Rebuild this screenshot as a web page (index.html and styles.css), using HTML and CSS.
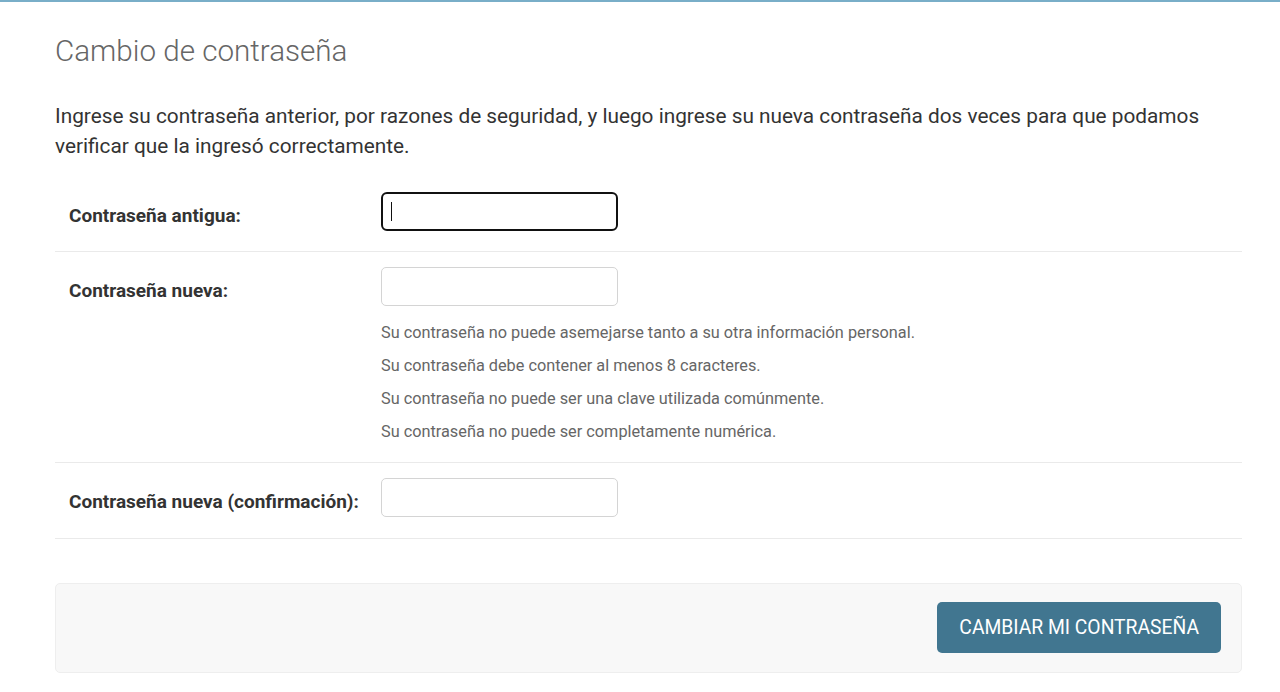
FILE: index.html
```html
<!DOCTYPE html>
<html lang="es">
<head>
<meta charset="utf-8">
<title>Cambio de contraseña</title>
<link rel="stylesheet" href="styles.css">
</head>
<body>
<div class="topbar"></div>
<main class="content">
  <h1 class="title">Cambio de contraseña</h1>
  <p class="intro">Ingrese su contraseña anterior, por razones de seguridad, y luego ingrese su nueva contraseña dos veces para que podamos verificar que la ingresó correctamente.</p>
  <form class="form">
    <div class="row row-first">
      <label class="label">Contraseña antigua:</label>
      <div class="field">
        <div class="input-wrap">
          <input class="input focused" type="password">
          <span class="caret"></span>
        </div>
      </div>
    </div>
    <div class="row row-help">
      <label class="label">Contraseña nueva:</label>
      <div class="field">
        <input class="input" type="password">
        <ul class="help">
          <li>Su contraseña no puede asemejarse tanto a su otra información personal.</li>
          <li>Su contraseña debe contener al menos 8 caracteres.</li>
          <li>Su contraseña no puede ser una clave utilizada comúnmente.</li>
          <li>Su contraseña no puede ser completamente numérica.</li>
        </ul>
      </div>
    </div>
    <div class="row">
      <label class="label">Contraseña nueva (confirmación):</label>
      <div class="field">
        <input class="input" type="password">
      </div>
    </div>
    <div class="submit-row">
      <button class="btn" type="button">CAMBIAR MI CONTRASEÑA</button>
    </div>
  </form>
</main>
</body>
</html>
```

FILE: styles.css
```css
* { box-sizing: border-box; }
html, body { margin: 0; padding: 0; background: #fff; }
body {
  font-family: Roboto, "Liberation Sans", Arial, sans-serif;
  color: #333;
}
.topbar {
  height: 2px;
  background: #79aec8;
}
.content {
  width: 1242px;
  padding-left: 55px;
}
.title {
  margin: 31px 0 0;
  font-size: 29.6px;
  line-height: 36px;
  font-weight: 300;
  color: #666;
}
.intro {
  margin: 32px 0 0;
  font-size: 20.8px;
  line-height: 30px;
  color: #333;
}
.form { margin-top: 15px; }
.row {
  display: flex;
  padding: 15px 14px 21px;
  border-bottom: 1px solid #eaeaea;
}
.row-first { padding-top: 16px; padding-bottom: 20px; }
.row-help { padding-bottom: 19px; }
.label {
  flex: 0 0 312px;
  padding-top: 12px;
  font-size: 19px;
  line-height: 24px;
  font-weight: 700;
  color: #333;
}
.field { flex: 1; }
.input-wrap { position: relative; width: 237px; }
.input {
  display: block;
  width: 237px;
  height: 39px;
  border: 1px solid #d4d4d4;
  border-radius: 5px;
  background: #fff;
  font-size: 17px;
  padding: 0 9px;
  outline: none;
}
.input.focused {
  border: 2px solid #111;
  border-radius: 6px;
}
.caret {
  position: absolute;
  left: 10px;
  top: 10px;
  width: 1px;
  height: 19px;
  background: #111;
}
.help {
  list-style: none;
  margin: 16px 0 0;
  padding: 0;
  font-size: 16.3px;
  line-height: 22px;
  color: #666;
}
.help li { margin-top: 11px; }
.submit-row {
  margin-top: 44px;
  display: flex;
  justify-content: flex-end;
  padding: 18px 20px 19px;
  background: #f8f8f8;
  border: 1px solid #eee;
  border-radius: 5px;
}
.btn {
  height: 51px;
  padding: 0 22px;
  border: none;
  border-radius: 5px;
  background: #417690;
  color: #fff;
  font-family: Roboto, "Liberation Sans", Arial, sans-serif;
  font-size: 19.3px;
  letter-spacing: 0;
}
```
